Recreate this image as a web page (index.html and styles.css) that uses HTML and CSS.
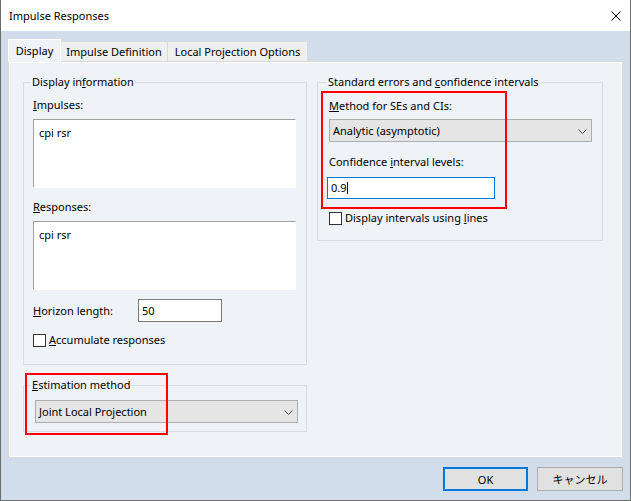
FILE: index.html
```html
<!DOCTYPE html>
<html lang="en">
<head>
    <meta charset="UTF-8">
    <title>Impulse Responses</title>
    <link rel="stylesheet" href="styles.css">
</head>
<body>
<div class="dialog">
    <!-- 타이틀바 -->
    <div class="titlebar">
        <span class="title">Impulse Responses</span>
        <svg class="close" width="10" height="10" viewBox="0 0 10 10">
            <path d="M0.5 0.5 L9.5 9.5 M9.5 0.5 L0.5 9.5" stroke="#000" stroke-width="1" fill="none"/>
        </svg>
    </div>

    <div class="client">
        <!-- 탭 -->
        <div class="tabs">
            <div class="tab active tab-display">Display</div>
            <div class="tab tab-impulse">Impulse Definition</div>
            <div class="tab tab-lp">Local Projection Options</div>
        </div>

        <div class="panel">
            <div class="col col-left">
                <fieldset class="group group-info">
                    <legend>Display in<u>f</u>ormation</legend>
                    <div class="label"><u>I</u>mpulses:</div>
                    <div class="textbox">cpi rsr</div>
                    <div class="label label-gap"><u>R</u>esponses:</div>
                    <div class="textbox">cpi rsr</div>
                    <div class="row horizon-row">
                        <span class="row-label"><u>H</u>orizon length:</span>
                        <div class="edit horizon-edit">50</div>
                    </div>
                    <div class="check-row accum-row">
                        <span class="checkbox"></span>
                        <span><u>A</u>ccumulate responses</span>
                    </div>
                </fieldset>

                <fieldset class="group group-est">
                    <legend><u>E</u>stimation method</legend>
                    <div class="combo est-combo">
                        <span>Joint Local Projection</span>
                        <svg class="chevron" width="9" height="5" viewBox="0 0 9 5">
                            <path d="M0.5 0.5 L4.5 4.5 L8.5 0.5" stroke="#444" stroke-width="1" fill="none"/>
                        </svg>
                    </div>
                </fieldset>
            </div>

            <div class="col col-right">
                <fieldset class="group group-se">
                    <legend>Standard errors and <u>c</u>onfidence intervals</legend>
                    <div class="label"><u>M</u>ethod for SEs and CIs:</div>
                    <div class="combo se-combo">
                        <span>Analytic (asymptotic)</span>
                        <svg class="chevron" width="9" height="5" viewBox="0 0 9 5">
                            <path d="M0.5 0.5 L4.5 4.5 L8.5 0.5" stroke="#444" stroke-width="1" fill="none"/>
                        </svg>
                    </div>
                    <div class="label label-gap2">Confidence <u>i</u>nterval levels:</div>
                    <div class="edit ci-edit">0.9<span class="caret"></span></div>
                    <div class="check-row lines-row">
                        <span class="checkbox"></span>
                        <span>Display intervals using <u>l</u>ines</span>
                    </div>
                </fieldset>
            </div>
        </div>

        <!-- 하단 버튼 -->
        <div class="buttons">
            <button class="btn btn-ok">OK</button>
            <button class="btn btn-cancel">キャンセル</button>
        </div>
    </div>

    <!-- 빨간 강조 표시 -->
    <div class="mark mark-se"></div>
    <div class="mark mark-est"></div>
</div>
</body>
</html>
```

FILE: styles.css
```css
* {
    box-sizing: border-box;
    margin: 0;
    padding: 0;
}

body {
    font-family: "Segoe UI", "Noto Sans", "Noto Sans CJK JP", sans-serif;
    font-size: 11px;
    line-height: 16px;
    color: #000;
    background-color: #fff;
}

.dialog {
    position: relative;
    width: 631px;
    height: 501px;
    border: 1px solid #6e6e6e;
    border-top: none;
    display: flex;
    flex-direction: column;
}

/* 타이틀바 */
.titlebar {
    height: 31px;
    background-color: #fff;
    display: flex;
    align-items: center;
    justify-content: space-between;
    padding: 1px 9px 0 8px;
}

.close {
    display: block;
    margin-top: -1px;
}

.client {
    flex: 1;
    background-color: #d2ddec;
    padding: 8px 7px 0 7px;
}

/* 탭 */
.tabs {
    display: flex;
    align-items: flex-end;
    height: 22px;
}

.tab {
    height: 20px;
    line-height: 20px;
    text-align: center;
    background-color: #f0f0f0;
    border: 1px solid #d9d9d9;
    border-bottom: none;
    white-space: nowrap;
}

.tab.active {
    height: 23px;
    line-height: 21px;
    background-color: #eff2f7;
    border: 1px solid #fff;
    border-bottom: none;
    margin-bottom: -1px;
    position: relative;
    z-index: 1;
}

.tab-display {
    width: 53px;
}

.tab-impulse {
    width: 107px;
    border-left: none;
}

.tab-lp {
    width: 140px;
    border-left: none;
}

.panel {
    height: 397px;
    background-color: #eff2f7;
    border: 1px solid #d9d9d9;
    box-shadow: inset 1px 1px 0 #fff, inset -1px -1px 0 #fff;
    display: flex;
    gap: 10px;
    padding: 12px 0 0 14px;
}

.col-left {
    width: 284px;
}

.col-right {
    width: 286px;
}

/* 그룹박스 */
.group {
    border: 1px solid #d9dcdf;
    padding: 0 10px 0 9px;
    min-width: 0;
}

.group legend {
    padding: 0 1px;
    margin-left: -2px;
    line-height: 16px;
}

.group-info {
    padding-top: 6px;
    padding-bottom: 16px;
}

.group-est {
    margin-top: 12px;
    padding-top: 7px;
    padding-bottom: 8px;
}

.group-se {
    padding: 7px 10px 14px 11px;
}

.label {
    height: 16px;
    line-height: 17px;
}

.label-gap {
    margin-top: 10px;
}

.label-gap2 {
    margin-top: 11px;
}

.textbox {
    margin-top: 7px;
    width: 263px;
    height: 69px;
    background-color: #fff;
    border: 1px solid;
    border-color: #a0a0a0 #fff #fff #a0a0a0;
    padding: 5px 5px;
}

.row {
    display: flex;
    align-items: center;
}

.horizon-row {
    margin-top: 9px;
}

.row-label {
    width: 105px;
}

.edit {
    height: 23px;
    background-color: #fff;
    border: 1px solid #7a7a7a;
    padding: 0 3px;
    line-height: 21px;
}

.horizon-edit {
    width: 84px;
}

.ci-edit {
    margin-top: 8px;
    margin-left: -2px;
    width: 168px;
    height: 22px;
    border-color: #0078d7;
    line-height: 20px;
}

.caret {
    display: inline-block;
    width: 1px;
    height: 12px;
    background-color: #000;
    vertical-align: -2px;
}

.check-row {
    display: flex;
    align-items: center;
    gap: 3px;
    height: 16px;
}

.accum-row {
    margin-top: 10px;
}

.lines-row {
    margin-top: 11px;
}

.checkbox {
    width: 13px;
    height: 13px;
    border: 1px solid #333;
    background-color: #fff;
}

/* 콤보박스 */
.combo {
    height: 23px;
    width: 263px;
    background-color: #e5e5e5;
    border: 1px solid #adadad;
    display: flex;
    align-items: center;
    justify-content: space-between;
    padding: 1px 4px 0 3px;
}

.est-combo {
    margin-left: 2px;
}

.se-combo {
    margin-top: 6px;
}

/* 버튼 */
.buttons {
    display: flex;
    justify-content: flex-end;
    gap: 9px;
    margin-top: 9px;
    padding-right: 0;
}

.btn {
    font-family: "Segoe UI", "Noto Sans", "Noto Sans CJK JP", sans-serif;
    font-size: 11px;
    height: 24px;
    background-color: #e1e1e1;
    border: 1px solid #adadad;
    color: #000;
}

.btn-ok {
    width: 85px;
    border: 2px solid #0078d7;
}

.btn-cancel {
    width: 86px;
}

/* 강조 표시 */
.mark {
    position: absolute;
    border: 2px solid #ff0000;
}

.mark-se {
    left: 320px;
    top: 91px;
    width: 186px;
    height: 118px;
}

.mark-est {
    left: 24px;
    top: 373px;
    width: 143px;
    height: 62px;
}
```
